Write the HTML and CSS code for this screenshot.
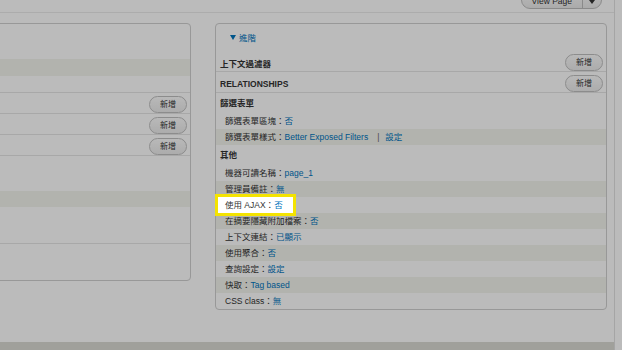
FILE: index.html
```html
<!DOCTYPE html>
<html lang="zh-Hant">
<head>
    <meta charset="UTF-8">
    <meta name="viewport" content="width=device-width, initial-scale=1.0">
    <title>Views - 使用 AJAX</title>
    <link rel="stylesheet" href="styles.css">
</head>
<body>
    <div class="page">
        <div class="top-bar">
            <div class="view-page">
                <span class="view-page-main">View Page</span>
                <span class="view-page-arrow">
                    <svg width="6" height="4" viewBox="0 0 6 4"><path d="M0 0h6L3 4z" fill="#333"/></svg>
                </span>
            </div>
        </div>

        <div class="columns">
            <div class="panel panel-left">
                <div class="gap-tall"></div>
                <div class="stripe"></div>
                <div class="gap-rule"></div>
                <div class="add-row"><button class="add-btn">新增</button></div>
                <div class="add-row"><button class="add-btn">新增</button></div>
                <div class="add-row"><button class="add-btn">新增</button></div>
                <div class="gap-tall"></div>
                <div class="stripe stripe-short"></div>
                <div class="gap-block gap-rule-tall"></div>
                <div class="gap-block"></div>
            </div>

            <div class="panel panel-right">
                <a class="toggle" href="#">
                    <svg width="6" height="5" viewBox="0 0 6 5"><path d="M0 0h6L3 5z" fill="#0074bd"/></svg>
                    進階
                </a>

                <div class="section-head">
                    <h3>上下文過濾器</h3>
                    <button class="add-btn">新增</button>
                </div>
                <div class="section-head">
                    <h3>RELATIONSHIPS</h3>
                    <button class="add-btn">新增</button>
                </div>

                <h3 class="group-title">篩選表單</h3>
                <div class="setting">篩選表單區塊：<a href="#">否</a></div>
                <div class="setting even">篩選表單樣式：<a href="#">Better Exposed Filters</a><span class="sep">|</span><a href="#">設定</a></div>

                <h3 class="group-title">其他</h3>
                <div class="setting">機器可讀名稱：<a href="#">page_1</a></div>
                <div class="setting even">管理員備註：<a href="#">無</a></div>
                <div class="setting"><span class="tour-target">使用 AJAX：<a href="#">否</a></span></div>
                <div class="setting even">在摘要隱藏附加檔案：<a href="#">否</a></div>
                <div class="setting">上下文連結：<a href="#">已顯示</a></div>
                <div class="setting even">使用聚合：<a href="#">否</a></div>
                <div class="setting">查詢設定：<a href="#">設定</a></div>
                <div class="setting even">快取：<a href="#">Tag based</a></div>
                <div class="setting last">CSS class：<a href="#">無</a></div>
            </div>
        </div>

        <div class="bottom-strip"></div>
    </div>

    <div class="tour-overlay"></div>
</body>
</html>
```

FILE: styles.css
```css
* {
    box-sizing: border-box;
}
body {
    margin: 0;
    font-family: "Liberation Sans", "Noto Sans CJK TC", sans-serif;
    font-size: 8.5px;
    color: #333;
    background-color: #fff;
    overflow: hidden;
}
a {
    color: #0074bd;
    text-decoration: none;
}
.page {
    width: 615px;
    height: 350px;
    border-right: 1px solid #e2e2e2;
    display: flex;
    flex-direction: column;
}
.top-bar {
    height: 13px;
    border-bottom: 1px solid #ebebeb;
    display: flex;
    justify-content: flex-end;
    padding-right: 12px;
}
.view-page {
    display: flex;
    height: 18px;
    margin-top: -9px;
    border: 1px solid #bdbdbd;
    border-radius: 10px;
    background: linear-gradient(#fdfdfd, #e9e9e9);
}
.view-page-main {
    padding: 0 10px;
    line-height: 18px;
}
.view-page-arrow {
    width: 19px;
    border-left: 1px solid #bdbdbd;
    display: flex;
    justify-content: center;
    align-items: center;
    padding-top: 3px;
}
.columns {
    flex: 1;
    display: flex;
    align-items: flex-start;
    gap: 24px;
    padding-top: 10px;
}
.panel {
    border: 1px solid #cfcfcf;
    border-radius: 4px;
    background-color: #fff;
}
.panel-left {
    flex: 0 0 201px;
    margin-left: -10px;
}
.panel-right {
    flex: 0 0 392px;
}
.gap-tall {
    height: 35px;
}
.stripe {
    height: 17px;
    background-color: #f3f4ee;
}
.stripe-short {
    height: 16px;
}
.gap-rule {
    height: 17px;
    border-bottom: 1px solid #e6e6e6;
}
.gap-block {
    height: 36px;
}
.gap-rule-tall {
    height: 37px;
    border-bottom: 1px solid #e6e6e6;
}
.add-row {
    height: 21px;
    padding: 3px 3px 0;
    border-bottom: 1px solid #e6e6e6;
    display: flex;
    justify-content: flex-end;
}
.add-btn {
    height: 17px;
    padding: 0 10px;
    font-family: inherit;
    font-size: 8px;
    line-height: 15px;
    color: #333;
    border: 1px solid #bfbfbf;
    border-radius: 9px;
    background: linear-gradient(#fcfcfc, #ebebeb);
}
.toggle {
    display: flex;
    align-items: center;
    gap: 3px;
    height: 16px;
    margin: 5px 0 6px 14px;
}
.section-head {
    height: 21px;
    padding: 3px 3px 0 4px;
    border-bottom: 1px solid #e6e6e6;
    display: flex;
    justify-content: space-between;
    align-items: center;
}
.section-head h3 {
    margin: 0;
    font-size: 8.5px;
}
.group-title {
    margin: 0;
    height: 20px;
    line-height: 20px;
    padding-left: 4px;
    font-size: 8.5px;
}
.setting {
    height: 16px;
    line-height: 16px;
    padding-left: 9px;
    white-space: nowrap;
}
.setting.even {
    background-color: #f3f4ee;
}
.setting.last {
    border-radius: 0 0 3px 3px;
}
.sep {
    margin: 0 6px 0 9px;
    color: #666;
}
.tour-target {
    position: relative;
    z-index: 101;
    display: inline-block;
    vertical-align: top;
    height: 16px;
    margin-left: -7px;
    padding: 0 10px 0 7px;
    background-color: #fff;
    outline: 3px solid #f4e300;
}
.bottom-strip {
    height: 8px;
    background-color: #dadad4;
}
.tour-overlay {
    position: fixed;
    inset: 0;
    z-index: 100;
    background-color: rgba(0, 0, 0, 0.267);
}
```
